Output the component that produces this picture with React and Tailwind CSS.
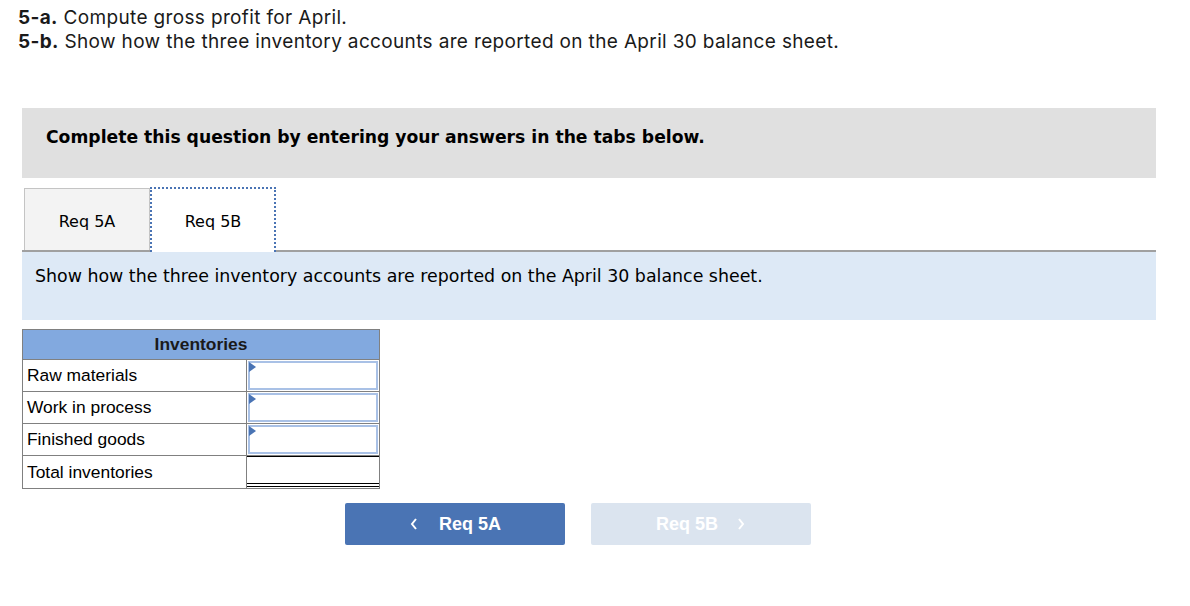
import React from "react";

const verdana = { fontFamily: '"DejaVu Sans", Verdana, sans-serif' };
const arial = { fontFamily: '"Liberation Sans", Arial, sans-serif' };

function InputCell() {
  return (
    <div className="relative h-full p-px">
      <div className="h-full border-2 border-[#a9c1e6] bg-white" />
      <span className="absolute left-0.5 top-0.5 h-0 w-0 border-y-[5px] border-l-[7px] border-y-transparent border-l-[#4a74b4]" />
    </div>
  );
}

export default function App() {
  const rows = ["Raw materials", "Work in process", "Finished goods"];

  return (
    <div className="min-h-[606px] w-[1190px] bg-white text-black">
      {/* question prompt */}
      <div className="px-[18px] pt-[6px] text-[19px] leading-[24px] tracking-[0.35px] text-[#1a1a1a]" style={{ fontFamily: 'Inter, "Open Sans", sans-serif' }}>
        <p><b>5-a.</b> Compute gross profit for April.</p>
        <p><b>5-b.</b> Show how the three inventory accounts are reported on the April 30 balance sheet.</p>
      </div>

      <div className="ml-[22px] mt-[54px] w-[1134px]">
        <div className="h-[70px] bg-[#e0e0e0] pl-6 pt-[17px] text-[17.2px] font-bold leading-[24px]" style={verdana}>
          Complete this question by entering your answers in the tabs below.
        </div>

        {/* tabs */}
        <div className="mt-[9px] flex items-end border-b-2 border-[#a0a0a0]" style={verdana}>
          <div className="ml-[2px] flex h-[62px] w-[126px] items-center justify-center border border-b-0 border-[#c4c4c4] bg-[#f3f3f3] pt-[4px] text-[16px]">
            Req 5A
          </div>
          <div className="-mb-[2px] flex h-[65px] w-[126px] items-center justify-center border-2 border-b-0 border-dotted border-[#4a74b4] bg-white pt-[3px] text-[16px]">
            Req 5B
          </div>
        </div>

        <div className="h-[68px] bg-[#dde9f6] pl-[13px] pt-[12px] text-[17.4px] leading-[24px]" style={verdana}>
          Show how the three inventory accounts are reported on the April 30 balance sheet.
        </div>

        {/* table */}
        <div className="mt-[9px] w-[358px] border border-[#808080] text-[17.4px]" style={arial}>
          <div className="flex h-[30px] items-center justify-center border-b border-[#808080] bg-[#82a9df] font-bold text-[#1a1a1a]">
            Inventories
          </div>
          {rows.map((r) => (
            <div key={r} className="flex h-[32px] border-b border-[#808080]">
              <div className="flex w-[224px] items-center border-r border-[#808080] pl-[4px]">{r}</div>
              <div className="flex-1">
                <InputCell />
              </div>
            </div>
          ))}
          <div className="flex h-[32px]">
            <div className="flex w-[224px] items-center border-r border-[#808080] pl-[4px]">Total inventories</div>
            <div className="flex flex-1 flex-col border-t border-black">
              <div className="flex-1" />
              <div className="mb-[1px] h-[4px] border-y border-black" />
            </div>
          </div>
        </div>

        {/* nav buttons */}
        <div className="ml-[323px] mt-[14px] flex gap-[26px] text-[18px] font-bold text-white" style={arial}>
          <div className="flex h-[42px] w-[220px] items-center justify-center gap-[20px] rounded-[2px] bg-[#4a74b4]">
            <svg width="10" height="14" viewBox="0 0 10 14" fill="none" stroke="white" strokeWidth="2">
              <path d="M7 2 L3 7 L7 12" />
            </svg>
            <span>Req 5A</span>
          </div>
          <div className="flex h-[42px] w-[220px] items-center justify-center gap-[18px] rounded-[2px] bg-[#dbe4ef]">
            <span>Req 5B</span>
            <svg width="10" height="14" viewBox="0 0 10 14" fill="none" stroke="white" strokeWidth="2">
              <path d="M3 2 L7 7 L3 12" />
            </svg>
          </div>
        </div>
      </div>
    </div>
  );
}
